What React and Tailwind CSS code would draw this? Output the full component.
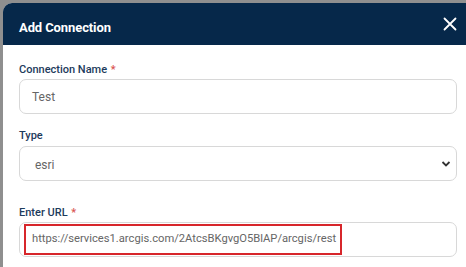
import React from "react";

export default function App() {
  return (
    <div className="w-[466px] h-[267px] bg-[#8f8f8f] pt-[3px] pl-[3px] overflow-hidden" style={{ fontFamily: "Roboto, 'Liberation Sans', sans-serif" }}>
      <div className="h-full bg-white rounded-tl-[9px] overflow-hidden flex flex-col">
        <div className="h-[42px] bg-[#06284a] flex items-center justify-between pl-[16px] pr-[8px] shrink-0">
          <span className="text-white text-[13px] font-bold tracking-[-0.1px] mt-[7px]">Add Connection</span>
          <svg width="14" height="14" viewBox="0 0 14 14" className="mr-[1px] mb-[1px]">
            <path d="M1.5 1.5 L12.5 12.5 M12.5 1.5 L1.5 12.5" stroke="white" strokeWidth="1.8" strokeLinecap="round" />
          </svg>
        </div>
        <div className="pl-[16px] pr-[6px] pt-[18px] flex flex-col">
          <div className="text-[11px] font-medium text-[#1d3b5c] leading-[13px]">
            Connection Name <span className="text-[#d9534f] ml-[1px]">*</span>
          </div>
          <div className="mt-[3px] h-[35px] w-[438px] border border-[#d8d8d8] rounded-[7px] flex items-center pl-[12px] text-[12px] text-[#666]">
            Test
          </div>
          <div className="mt-[15px] text-[11px] font-medium text-[#1d3b5c] leading-[13px]">Type</div>
          <div className="mt-[4px] h-[35px] w-[438px] border border-[#d8d8d8] rounded-[7px] flex items-center justify-between pl-[15px] pr-[5px] text-[12px] text-[#666]">
            <span className="mt-[2px]">esri</span>
            <svg width="10" height="8" viewBox="0 0 10 8">
              <path d="M1.5 2 L5 5.5 L8.5 2" stroke="#333" strokeWidth="1.8" fill="none" />
            </svg>
          </div>
          <div className="mt-[25px] text-[11px] font-medium text-[#1d3b5c] leading-[13px]">
            Enter URL <span className="text-[#d9534f] ml-[1px]">*</span>
          </div>
          <div className="mt-[3px] h-[35px] w-[438px] border border-[#d8d8d8] rounded-[7px] flex items-center pl-[4px]">
            <div className="h-[31px] w-[318px] border-2 border-[#d7262b] flex items-center pl-[6px] text-[11.2px] text-[#666] whitespace-nowrap">
              https://services1.arcgis.com/2AtcsBKgvgO5BlAP/arcgis/rest
            </div>
          </div>
        </div>
      </div>
    </div>
  );
}
